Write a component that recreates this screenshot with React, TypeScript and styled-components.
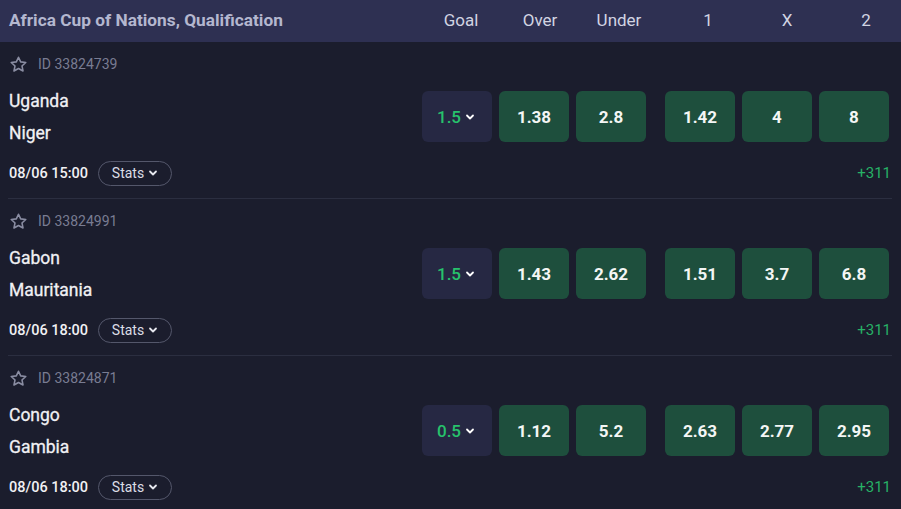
import React from "react";
import styled, { createGlobalStyle } from "styled-components";

const Global = createGlobalStyle`
  html, body { margin: 0; padding: 0; background: #1b1d2d; }
  body { font-family: Roboto, "Liberation Sans", Arial, sans-serif; -webkit-font-smoothing: antialiased; }
  * { box-sizing: border-box; }
`;

const Page = styled.div`
  width: 901px;
  height: 509px;
  overflow: hidden;
  background: #1b1d2d;
`;

const Header = styled.div`
  height: 42px;
  display: flex;
  align-items: center;
  background: #2e3052;
  padding-left: 9px;
`;

const Title = styled.div`
  flex: 1;
  font-size: 17.3px;
  font-weight: 700;
  color: #b4b7cf;
  margin-top: -3px;
`;

const HeaderCols = styled.div`
  display: flex;
  align-items: center;
  margin-top: -3px;
`;

const HeaderGroup = styled.div<{ $ml?: number }>`
  display: flex;
  gap: 9px;
  margin-left: ${(p) => p.$ml ?? 0}px;
`;

const HeaderLabel = styled.div`
  width: 70px;
  text-align: center;
  font-size: 17px;
  color: #d2d4e2;
`;

const Row = styled.div`
  margin: 0 9px 0 8px;
  padding: 12px 1px 12px 0;
  border-bottom: 1px solid #2b2e40;
  display: flex;
  flex-direction: column;
`;

const IdLine = styled.div`
  height: 20px;
  display: flex;
  align-items: center;
  gap: 10px;
  padding-left: 1px;
  font-size: 14px;
  color: #797c92;
`;

const Middle = styled.div`
  margin-top: 10px;
  display: flex;
  align-items: center;
`;

const Teams = styled.div`
  flex: 1;
  display: flex;
  flex-direction: column;
  padding-top: 1px;
`;

const Team = styled.div`
  height: 32px;
  line-height: 32px;
  font-size: 17.5px;
  font-weight: 400;
  color: #f1f1f4;
  padding-left: 1px;
  -webkit-text-stroke: 0.3px #f1f1f4;
`;

const Odds = styled.div`
  display: flex;
  align-items: center;
  margin-right: 2px;
`;

const OddsGroup = styled.div<{ $ml?: number }>`
  display: flex;
  gap: 7px;
  margin-left: ${(p) => p.$ml ?? 0}px;
`;

const Select = styled.div`
  width: 70px;
  height: 51px;
  border-radius: 6px;
  background: #262843;
  display: flex;
  align-items: center;
  justify-content: center;
  gap: 4px;
  font-size: 17px;
  font-weight: 500;
  color: #27c26c;
  padding-right: 2px;
`;

const OddBtn = styled.div`
  width: 70px;
  height: 51px;
  border-radius: 6px;
  background: #1e4f3d;
  display: flex;
  align-items: center;
  justify-content: center;
  font-size: 17px;
  font-weight: 700;
  color: #f4f6f5;
`;

const Bottom = styled.div`
  margin-top: 11px;
  height: 26px;
  display: flex;
  align-items: center;
`;

const Date = styled.div`
  font-size: 14.5px;
  font-weight: 500;
  color: #f1f1f4;
  padding-left: 1px;
  margin-right: 10px;
`;

const StatsPill = styled.div`
  height: 25px;
  width: 74px;
  border: 1px solid #54576b;
  border-radius: 13px;
  display: flex;
  align-items: center;
  justify-content: center;
  gap: 4px;
  font-size: 14px;
  color: #dcdde6;
`;

const More = styled.div`
  margin-left: auto;
  font-size: 15px;
  color: #27b166;
`;

const Chevron = ({ color = "#ffffff", size = 10 }: { color?: string; size?: number }) => (
  <svg width={size} height={size} viewBox="0 0 10 10" fill="none">
    <path d="M2 3.5 L5 6.5 L8 3.5" stroke={color} strokeWidth="1.8" strokeLinecap="round" strokeLinejoin="round" />
  </svg>
);

const Star = () => (
  <svg width="19" height="19" viewBox="0 0 24 24" fill="none">
    <path
      d="M12 2.8l2.75 5.9 6.45.75-4.8 4.4 1.3 6.4L12 17.05 6.3 20.25l1.3-6.4-4.8-4.4 6.45-.75z"
      stroke="#8a8da2"
      strokeWidth="2"
      strokeLinejoin="round"
    />
  </svg>
);

type Match = {
  id: string;
  home: string;
  away: string;
  date: string;
  goal: string;
  over: string;
  under: string;
  one: string;
  x: string;
  two: string;
};

const matches: Match[] = [
  { id: "33824739", home: "Uganda", away: "Niger", date: "08/06 15:00", goal: "1.5", over: "1.38", under: "2.8", one: "1.42", x: "4", two: "8" },
  { id: "33824991", home: "Gabon", away: "Mauritania", date: "08/06 18:00", goal: "1.5", over: "1.43", under: "2.62", one: "1.51", x: "3.7", two: "6.8" },
  { id: "33824871", home: "Congo", away: "Gambia", date: "08/06 18:00", goal: "0.5", over: "1.12", under: "5.2", one: "2.63", x: "2.77", two: "2.95" },
];

export default function App() {
  return (
    <Page>
      <Global />
      <Header>
        <Title>Africa Cup of Nations, Qualification</Title>
        <HeaderCols>
          <HeaderGroup>
            <HeaderLabel>Goal</HeaderLabel>
            <HeaderLabel>Over</HeaderLabel>
            <HeaderLabel>Under</HeaderLabel>
          </HeaderGroup>
          <HeaderGroup $ml={19}>
            <HeaderLabel>1</HeaderLabel>
            <HeaderLabel>X</HeaderLabel>
            <HeaderLabel>2</HeaderLabel>
          </HeaderGroup>
        </HeaderCols>
      </Header>
      {matches.map((m) => (
        <Row key={m.id}>
          <IdLine>
            <Star />
            <span>ID {m.id}</span>
          </IdLine>
          <Middle>
            <Teams>
              <Team>{m.home}</Team>
              <Team>{m.away}</Team>
            </Teams>
            <Odds>
              <OddsGroup>
                <Select>
                  {m.goal}
                  <Chevron />
                </Select>
                <OddBtn>{m.over}</OddBtn>
                <OddBtn>{m.under}</OddBtn>
              </OddsGroup>
              <OddsGroup $ml={19}>
                <OddBtn>{m.one}</OddBtn>
                <OddBtn>{m.x}</OddBtn>
                <OddBtn>{m.two}</OddBtn>
              </OddsGroup>
            </Odds>
          </Middle>
          <Bottom>
            <Date>{m.date}</Date>
            <StatsPill>
              Stats
              <Chevron color="#e6e7ee" size={10} />
            </StatsPill>
            <More>+311</More>
          </Bottom>
        </Row>
      ))}
    </Page>
  );
}
